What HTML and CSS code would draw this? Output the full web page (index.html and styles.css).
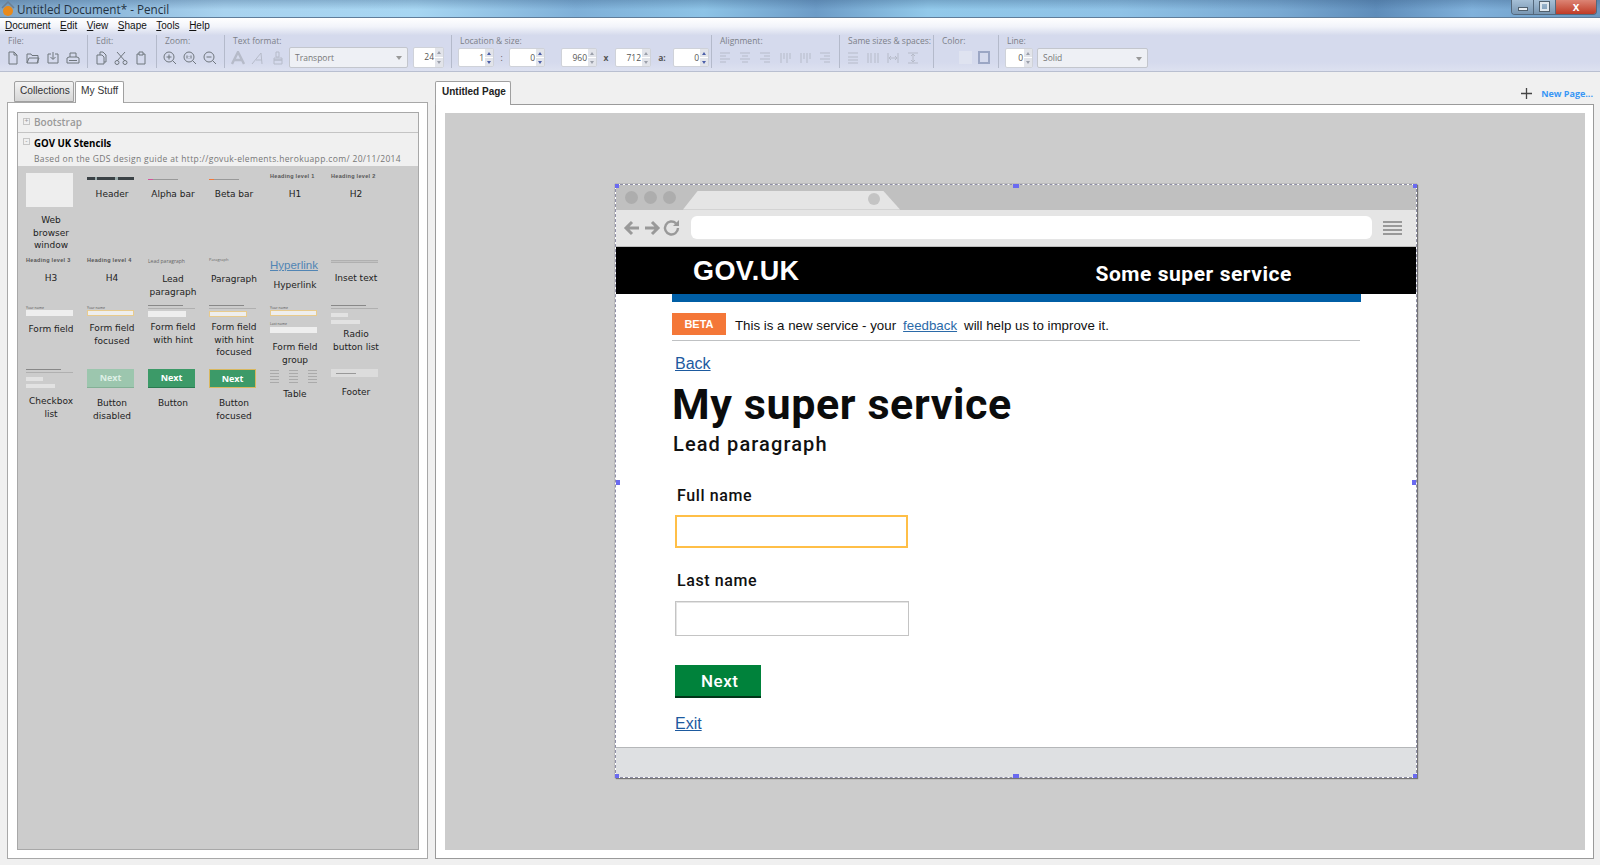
FILE: index.html

```html
<!DOCTYPE html>
<html lang="en">
<head>
  <meta charset="UTF-8">
  <meta name="viewport" content="width=device-width, initial-scale=1.0">
  <title>Untitled Document* - Pencil</title>
  <link rel="stylesheet" href="styles.css">
</head>
<body>
  <svg class="defs" width="0" height="0">
    <symbol id="i-new" viewBox="0 0 14 14"><path d="M3 1h5l3 3v9H3z M8 1v3h3"/></symbol>
    <symbol id="i-open" viewBox="0 0 14 14"><path d="M1 12V3h4l1 1.500h6V12z M1 12l2-5h10l-2 5"/></symbol>
    <symbol id="i-save" viewBox="0 0 14 14"><path d="M2 3h3 M9 3h3v9H2V3 M7 1v7 M4.500 6L7 8.500 9.500 6"/></symbol>
    <symbol id="i-print" viewBox="0 0 14 14"><path d="M4 6V2h6v4 M1 12V7l2-1h8l2 1v5z M3 9.500h8"/></symbol>
    <symbol id="i-copy" viewBox="0 0 14 14"><path d="M3 4h5l2 2v7H3z M6 4V1h3l3 3v7h-2"/></symbol>
    <symbol id="i-cut" viewBox="0 0 14 14"><path d="M3 1l8 9 M11 1L3 10"/><circle cx="3" cy="11.500" r="2"/><circle cx="11" cy="11.500" r="2"/></symbol>
    <symbol id="i-paste" viewBox="0 0 14 14"><path d="M3 3h2 M9 3h2v10H3V3 M5 4V1h4v3z"/></symbol>
    <symbol id="i-zin" viewBox="0 0 14 14"><circle cx="6" cy="6" r="5"/><path d="M9.500 9.500L13 13 M3.500 6h5 M6 3.500v5"/></symbol>
    <symbol id="i-z11" viewBox="0 0 14 14"><circle cx="6" cy="6" r="5"/><path d="M9.500 9.500L13 13 M4 4.500v3 M8 4.500v3 M6 5v.500 M6 7v.500"/></symbol>
    <symbol id="i-zout" viewBox="0 0 14 14"><circle cx="6" cy="6" r="5"/><path d="M9.500 9.500L13 13 M3.500 6h5"/></symbol>
    <symbol id="i-bold" viewBox="0 0 14 14"><path d="M1 13L7 1l6 12 M3.500 9h7" stroke-width="2.400"/></symbol>
    <symbol id="i-ital" viewBox="0 0 14 14"><path d="M1 13L10 2l1 11 M5 9h6"/></symbol>
    <symbol id="i-brush" viewBox="0 0 14 14"><path d="M5 1h3v5H5z M3 7h8v2H3z M3 9h8v4H3z"/></symbol>
    <symbol id="i-al" viewBox="0 0 14 14"><path d="M2 2h10 M2 5h6 M2 8h10 M2 11h6"/></symbol>
    <symbol id="i-ac" viewBox="0 0 14 14"><path d="M2 2h10 M4 5h6 M2 8h10 M4 11h6"/></symbol>
    <symbol id="i-ar" viewBox="0 0 14 14"><path d="M2 2h10 M6 5h6 M2 8h10 M6 11h6"/></symbol>
    <symbol id="i-av" viewBox="0 0 14 14"><path d="M3 2v10 M6 2v6 M9 2v10 M12 2v6"/></symbol>
    <symbol id="i-sh" viewBox="0 0 14 14"><path d="M2 2h10 M2 6h10 M2 9h10 M2 12h10"/></symbol>
    <symbol id="i-sv" viewBox="0 0 14 14"><path d="M2 2v10 M5 2v10 M9 2v10 M12 2v10"/></symbol>
    <symbol id="i-gh" viewBox="0 0 14 14"><path d="M2 2v10 M12 2v10 M3 7h8 M3 7l2-2 M3 7l2 2 M11 7L9 5 M11 7L9 9"/></symbol>
    <symbol id="i-gv" viewBox="0 0 14 14"><path d="M2 2h10 M2 12h10 M7 3v8 M7 3L5 5 M7 3l2 2 M7 11L5 9 M7 11l2-2"/></symbol>
  </svg>

  <div class="app">
    <div class="titlebar">
      <svg class="app-logo" width="14" height="16" viewBox="0 0 14 16"><path d="M1 7l6-6 6 6" fill="none" stroke="#6b7f93" stroke-width="1.500"/><circle cx="7" cy="10" r="5" fill="#e88a1c"/></svg>
      <span class="title-text">Untitled Document* - Pencil</span>
      <div class="win-btns">
        <span class="win-btn"><i class="win-min"></i></span>
        <span class="win-btn"><i class="win-max"></i></span>
        <span class="win-btn win-close">x</span>
      </div>
    </div>

    <div class="menubar">
      <span><u>D</u>ocument</span>
      <span><u>E</u>dit</span>
      <span><u>V</u>iew</span>
      <span><u>S</u>hape</span>
      <span><u>T</u>ools</span>
      <span><u>H</u>elp</span>
    </div>

    <div class="toolbar">
      <div class="tgroup g-file">
        <div class="tlabel">File:</div>
        <div class="tools">
          <svg class="ico"><use href="#i-new"/></svg>
          <svg class="ico"><use href="#i-open"/></svg>
          <svg class="ico"><use href="#i-save"/></svg>
          <svg class="ico"><use href="#i-print"/></svg>
        </div>
      </div>
      <div class="tgroup g-edit">
        <div class="tlabel">Edit:</div>
        <div class="tools">
          <svg class="ico"><use href="#i-copy"/></svg>
          <svg class="ico"><use href="#i-cut"/></svg>
          <svg class="ico"><use href="#i-paste"/></svg>
        </div>
      </div>
      <div class="tgroup g-zoom">
        <div class="tlabel">Zoom:</div>
        <div class="tools">
          <svg class="ico"><use href="#i-zin"/></svg>
          <svg class="ico"><use href="#i-z11"/></svg>
          <svg class="ico"><use href="#i-zout"/></svg>
        </div>
      </div>
      <div class="tgroup g-text">
        <div class="tlabel">Text format:</div>
        <div class="tools">
          <svg class="ico off"><use href="#i-bold"/></svg>
          <svg class="ico off"><use href="#i-ital"/></svg>
          <svg class="ico off"><use href="#i-brush"/></svg>
          <div class="combo combo-font">Transport<i class="caret"></i></div>
          <div class="spin spin-size">24<span class="arrows"><b></b><b></b></span></div>
        </div>
      </div>
      <div class="tgroup g-loc">
        <div class="tlabel">Location &amp; size:</div>
        <div class="tools loc-tools">
          <div class="spin active">1<span class="arrows"><b></b><b></b></span></div>
          <span class="sep-char">:</span>
          <div class="spin active">0<span class="arrows"><b></b><b></b></span></div>
          <div class="spin spin-w">960<span class="arrows"><b></b><b></b></span></div>
          <span class="sep-char">x</span>
          <div class="spin">712<span class="arrows"><b></b><b></b></span></div>
          <span class="sep-char sep-a">a:</span>
          <div class="spin active">0<span class="arrows"><b></b><b></b></span></div>
        </div>
      </div>
      <div class="tgroup g-align">
        <div class="tlabel">Alignment:</div>
        <div class="tools">
          <svg class="ico off"><use href="#i-al"/></svg>
          <svg class="ico off"><use href="#i-ac"/></svg>
          <svg class="ico off"><use href="#i-ar"/></svg>
          <svg class="ico off"><use href="#i-av"/></svg>
          <svg class="ico off"><use href="#i-av"/></svg>
          <svg class="ico off"><use href="#i-ar"/></svg>
        </div>
      </div>
      <div class="tgroup g-same">
        <div class="tlabel">Same sizes &amp; spaces:</div>
        <div class="tools">
          <svg class="ico off"><use href="#i-sh"/></svg>
          <svg class="ico off"><use href="#i-sv"/></svg>
          <svg class="ico off"><use href="#i-gh"/></svg>
          <svg class="ico off"><use href="#i-gv"/></svg>
        </div>
      </div>
      <div class="tgroup g-color">
        <div class="tlabel">Color:</div>
        <div class="tools swatches">
          <span class="swatch-fill"></span>
          <span class="swatch-line"></span>
        </div>
      </div>
      <div class="tgroup g-line">
        <div class="tlabel">Line:</div>
        <div class="tools">
          <div class="spin spin-line">0<span class="arrows"><b></b><b></b></span></div>
          <div class="combo combo-line">Solid<i class="caret"></i></div>
        </div>
      </div>
    </div>

    <div class="workspace">
      <!-- left side, stencil collections -->
      <div class="sidebar">
        <div class="tabs">
          <span class="tab tab-off">Collections</span>
          <span class="tab tab-on">My Stuff</span>
        </div>
        <div class="side-panel">
          <div class="stencil-list">
            <div class="coll-head">
              <span class="tree-box">+</span>
              <span class="coll-off">Bootstrap</span>
            </div>
            <div class="coll-open">
              <div class="coll-title"><span class="tree-box">-</span><b>GOV UK Stencils</b></div>
              <div class="coll-desc">Based on the GDS design guide at http://govuk-elements.herokuapp.com/ 20/11/2014</div>
            </div>
            <div class="stencils">
              <div class="st"><div class="pv h34"><div class="th-window"></div></div><div class="st-name">Web browser window</div></div>
              <div class="st"><div class="pv h14"><div class="th-header"></div></div><div class="st-name">Header</div></div>
              <div class="st"><div class="pv h14"><div class="th-bar pink"></div></div><div class="st-name">Alpha bar</div></div>
              <div class="st"><div class="pv h14"><div class="th-bar orange"></div></div><div class="st-name">Beta bar</div></div>
              <div class="st"><div class="pv h14"><div class="th-head">Heading level 1</div></div><div class="st-name">H1</div></div>
              <div class="st"><div class="pv h14"><div class="th-head">Heading level 2</div></div><div class="st-name">H2</div></div>

              <div class="st"><div class="pv h14"><div class="th-head">Heading level 3</div></div><div class="st-name">H3</div></div>
              <div class="st"><div class="pv h14"><div class="th-head">Heading level 4</div></div><div class="st-name">H4</div></div>
              <div class="st"><div class="pv h15"><div class="th-lead">Lead paragraph</div></div><div class="st-name">Lead paragraph</div></div>
              <div class="st"><div class="pv h15"><div class="th-para">Paragraph</div></div><div class="st-name">Paragraph</div></div>
              <div class="st"><div class="pv h21"><div class="th-link">Hyperlink</div></div><div class="st-name">Hyperlink</div></div>
              <div class="st"><div class="pv h14"><div class="th-inset"></div></div><div class="st-name">Inset text</div></div>

              <div class="st"><div class="pv h17"><div class="th-tiny">Your name</div><div class="th-input"></div></div><div class="st-name">Form field</div></div>
              <div class="st"><div class="pv h16"><div class="th-tiny">Your name</div><div class="th-input focus"></div></div><div class="st-name">Form field focused</div></div>
              <div class="st"><div class="pv h15"><div class="th-hint"></div><div class="th-input short"></div></div><div class="st-name">Form field with hint</div></div>
              <div class="st"><div class="pv h15"><div class="th-hint"></div><div class="th-input short focus"></div></div><div class="st-name">Form field with hint focused</div></div>
              <div class="st"><div class="pv h35"><div class="th-tiny">Your name</div><div class="th-input focus"></div><div class="th-tiny gap">Last name</div><div class="th-input"></div></div><div class="st-name">Form field group</div></div>
              <div class="st"><div class="pv h22"><div class="th-hint"></div><div class="th-radio"></div><div class="th-radio wide"></div></div><div class="st-name">Radio button list</div></div>

              <div class="st"><div class="pv h25"><div class="th-hint"></div><div class="th-radio"></div><div class="th-radio wide"></div></div><div class="st-name">Checkbox list</div></div>
              <div class="st"><div class="pv h27"><div class="th-btn disabled">Next</div></div><div class="st-name">Button disabled</div></div>
              <div class="st"><div class="pv h27"><div class="th-btn">Next</div></div><div class="st-name">Button</div></div>
              <div class="st"><div class="pv h27"><div class="th-btn outlined">Next</div></div><div class="st-name">Button focused</div></div>
              <div class="st"><div class="pv h18"><div class="th-table"><i></i><i></i><i></i></div></div><div class="st-name">Table</div></div>
              <div class="st"><div class="pv h16"><div class="th-footer"><i></i></div></div><div class="st-name">Footer</div></div>
            </div>
          </div>
        </div>
      </div>

      <!-- right side, the page canvas -->
      <div class="editor">
        <div class="page-tabs">
          <span class="tab tab-on page-tab">Untitled Page</span>
          <span class="new-page"><svg width="11" height="11" viewBox="0 0 11 11"><path d="M5.500 0v11 M0 5.500h11" stroke="#444" stroke-width="1.300"/></svg><b>New Page...</b></span>
        </div>
        <div class="page-panel">
          <div class="canvas">
            <div class="browser">
              <div class="tabstrip">
                <span class="dot"></span><span class="dot"></span><span class="dot"></span>
                <div class="chrome-tab"><span class="dot"></span></div>
              </div>
              <div class="navbar">
                <svg class="nav-ico" width="58" height="18" viewBox="0 0 58 18">
                  <path d="M16 9H3 M9 3L3 9l6 6 M22 9h13 M29 3l6 6-6 6" fill="none" stroke="#999" stroke-width="3"/>
                  <path d="M55 9a6.500 6.500 0 1 1-2-4.700" fill="none" stroke="#999" stroke-width="2.400"/>
                  <path d="M56 1v6h-6z" fill="#999"/>
                </svg>
                <div class="address"></div>
                <div class="burger"><i></i><i></i><i></i><i></i></div>
              </div>
              <div class="gov-head">
                <span class="gov-logo">GOV.UK</span>
                <span class="gov-service">Some super service</span>
              </div>
              <div class="gov-main">
                <div class="blue-bar"></div>
                <div class="phase">
                  <span class="phase-tag">BETA</span>
                  <span class="phase-text">This is a new service - your</span>
                  <a class="phase-text feedback">feedback</a>
                  <span class="phase-text">will help us to improve it.</span>
                </div>
                <a class="gov-link back">Back</a>
                <h1>My super service</h1>
                <p class="lead">Lead paragraph</p>
                <div class="f-label">Full name</div>
                <div class="f-input focused"></div>
                <div class="f-label second">Last name</div>
                <div class="f-input"></div>
                <div class="next-btn">Next</div>
                <a class="gov-link exit">Exit</a>
              </div>
              <div class="gov-foot"></div>

              <i class="handle h-tl"></i><i class="handle h-tc"></i><i class="handle h-tr"></i>
              <i class="handle h-ml"></i><i class="handle h-mr"></i>
              <i class="handle h-bl"></i><i class="handle h-bc"></i><i class="handle h-br"></i>
            </div>
          </div>
        </div>
      </div>
    </div>
  </div>
</body>
</html>
```

FILE: styles.css

```css
* {
  box-sizing: border-box;
}
body {
  margin: 0;
  background-color: #f0f0f0;
  font-family: "Open Sans", "DejaVu Sans", sans-serif;
  color: #222;
  overflow: hidden;
}
.defs {
  position: absolute;
}
.app {
  height: 865px;
  display: flex;
  flex-direction: column;
}

/* title bar */
.titlebar {
  height: 18px;
  flex: none;
  display: flex;
  align-items: center;
  padding-left: 1px;
  border-bottom: 1px solid #5f7d9a;
  background:
    linear-gradient(rgba(50, 85, 125, 0.3), rgba(50, 85, 125, 0) 55%),
    linear-gradient(90deg, #7ea4c6 0%, #8cb6d9 6%, #a9d3ef 14%, #a7d6f2 26%, #7fb0d8 36%, #8dc3e6 44%, #6d9cc7 51%, #92c9ea 58%, #8fc2e6 70%, #79a9d2 80%, #5f8dba 86%, #80b1db 92%, #6b97bf 100%);
}
.app-logo {
  margin-right: 2px;
}
.title-text {
  font-size: 11.700px;
  color: #24323f;
}
.win-btns {
  margin-left: auto;
  margin-right: 3px;
  margin-top: -3px;
  display: flex;
  height: 15px;
  border: 1px solid #54687c;
  border-top: 0;
  border-radius: 0 0 4px 4px;
  overflow: hidden;
}
.win-btn {
  width: 22px;
  display: flex;
  align-items: center;
  justify-content: center;
  border-right: 1px solid #54687c;
  background: linear-gradient(#a5bfd6, #7896b2);
}
.win-close {
  width: 40px;
  border-right: 0;
  background: linear-gradient(#dc8474, #bf3b26);
  color: #fff;
  font-family: "Liberation Sans", sans-serif;
  font-size: 12px;
  font-weight: bold;
  line-height: 12px;
}
.win-min {
  width: 10px;
  height: 4px;
  margin-top: 5px;
  background: #e8eef3;
  border: 1px solid #50606e;
}
.win-max {
  width: 9px;
  height: 9px;
  border: 2px solid #dfe7ee;
  outline: 1px solid #50606e;
}

/* menu and toolbar */
.menubar {
  height: 17px;
  flex: none;
  display: flex;
  gap: 9.500px;
  padding: 1px 0 0 5px;
  font-family: "Liberation Sans", sans-serif;
  font-size: 10px;
  line-height: 14px;
  color: #111;
  background: linear-gradient(#fff, #f2f4fa 50%, #d6dbed);
}
.toolbar {
  height: 37px;
  flex: none;
  display: flex;
  padding-bottom: 2px;
  background: linear-gradient(#d5daed 75%, #dde1f0);
  border-bottom: 1px solid #b9bfd0;
}
.tgroup {
  flex: none;
  height: 33px;
  padding-left: 8px;
  border-right: 1px solid #b4bacb;
}
.tlabel {
  font-size: 8.500px;
  line-height: 12px;
  color: #7c8088;
  white-space: nowrap;
}
.tools {
  display: flex;
  align-items: center;
  height: 21px;
  margin-left: -2px;
}
.g-file { width: 88px; }
.g-edit { width: 69px; }
.g-zoom { width: 68px; }
.g-text { width: 227px; }
.g-loc { width: 260px; }
.g-align { width: 128px; }
.g-same { width: 94px; }
.g-color { width: 65px; }
.g-line { border-right: 0; }

.ico {
  width: 14px;
  height: 14px;
  margin-right: 6px;
  fill: none;
  stroke: #6f767d;
  stroke-width: 1;
}
.ico.off {
  stroke: #b6bbc9;
}
.combo {
  position: relative;
  height: 21px;
  display: flex;
  align-items: center;
  padding-left: 5px;
  font-size: 8.500px;
  color: #777;
  background: #eef0f5;
  border: 1px solid #c3c6cd;
  border-radius: 2px;
}
.combo-font {
  width: 119px;
  margin-left: -2px;
}
.combo-line {
  width: 111px;
  height: 20px;
  margin-left: 4px;
}
.caret {
  position: absolute;
  right: 5px;
  top: 8px;
  border: 3px solid transparent;
  border-top: 4px solid #999;
  border-bottom: 0;
}
.spin {
  width: 36px;
  height: 21px;
  position: relative;
  flex: none;
  padding-right: 9px;
  background: #fff;
  border: 1px solid #cfd2d9;
  border-radius: 2px;
  text-align: right;
  font-size: 8.500px;
  line-height: 18px;
  color: #555;
}
.loc-tools .spin {
  height: 19px;
}
.spin-size {
  width: 31px;
  margin-left: 5px;
}
.spin-line {
  width: 28px;
  height: 20px;
}
.arrows {
  position: absolute;
  right: 0;
  top: 0;
  width: 8px;
  height: 100%;
  display: flex;
  flex-direction: column;
  gap: 1px;
}
.arrows b {
  flex: 1;
  background: #e2e4ea;
  position: relative;
}
.arrows b::after {
  content: "";
  position: absolute;
  left: 2px;
  top: 3px;
  border: 2px solid transparent;
  border-top: 0;
  border-bottom: 3px solid #9ba0aa;
}
.arrows b + b::after {
  transform: scaleY(-1);
}
.spin.active .arrows b::after {
  border-bottom-color: #4c5fa8;
}
.sep-char {
  width: 18px;
  text-align: center;
  font-size: 8.500px;
  font-weight: bold;
  color: #555;
}
.sep-char:nth-child(2) {
  width: 15px;
  font-weight: normal;
}
.sep-a {
  width: 22px;
}
.spin-w {
  margin-left: 16px;
}
.swatches {
  padding-left: 19px;
  gap: 6px;
}
.swatch-fill {
  width: 13px;
  height: 13px;
  background: #dfe3f0;
}
.swatch-line {
  width: 12px;
  height: 13px;
  border: 2px solid #9ba6c4;
}

/* workspace */
.workspace {
  flex: 1;
  display: flex;
  min-height: 0;
  padding: 9px 6px 6px 7px;
}
.sidebar {
  width: 421px;
  display: flex;
  flex-direction: column;
  flex: none;
}
.tabs {
  height: 22px;
  display: flex;
  gap: 1px;
  padding-left: 7px;
  margin-bottom: -1px;
  position: relative;
}
.tab {
  height: 22px;
  padding: 0 5px;
  font-family: "Liberation Sans", sans-serif;
  font-size: 10.200px;
  line-height: 17px;
  border: 1px solid #a0a0a0;
  border-bottom: 0;
  border-radius: 2px 2px 0 0;
  white-space: nowrap;
}
.tab-off {
  height: 21px;
  width: 60px;
  background: linear-gradient(#f3f3f3, #d6d6d6);
  border-bottom: 1px solid #a0a0a0;
  color: #333;
}
.tab-on {
  background: #fff;
  color: #333;
}
.side-panel {
  flex: 1;
  padding: 9px 8px 8px 9px;
  background: #fff;
  border: 1px solid #a8a8a8;
}
.stencil-list {
  height: 100%;
  display: flex;
  flex-direction: column;
  border: 1px solid #a8a8a8;
  background: #ccc;
}
.coll-head {
  height: 20px;
  display: flex;
  align-items: center;
  padding: 0 0 2px 5px;
  background: #f0f0f0;
  border-bottom: 1px solid #c4c4c4;
}
.tree-box {
  width: 7px;
  height: 7px;
  margin-right: 4px;
  border: 1px solid #c6c6c6;
  font-size: 7px;
  line-height: 4px;
  text-align: center;
  color: #999;
}
.coll-off {
  font-size: 10px;
  font-weight: 600;
  color: #999;
}
.coll-open {
  height: 33px;
  padding: 3px 0 0 5px;
  background: #f0f0f0;
}
.coll-title {
  display: flex;
  align-items: center;
  height: 15px;
  font-size: 9.700px;
  color: #000;
}
.coll-title .tree-box {
  margin-top: -5px;
}
.coll-desc {
  padding-left: 11px;
  font-size: 8.500px;
  line-height: 15px;
  letter-spacing: 0.350px;
  white-space: nowrap;
  color: #777;
}

/* stencil grid */
.stencils {
  display: grid;
  grid-template-columns: repeat(6, 61px);
  grid-template-rows: 84px 48px 64px auto;
  padding: 3px 0 0 1px;
}
.st {
  padding-top: 4px;
  display: flex;
  flex-direction: column;
  align-items: center;
}
.st-name {
  width: 52px;
  margin: 1px 0 0 3px;
  text-align: center;
  font-family: "DejaVu Sans", sans-serif;
  font-size: 9px;
  line-height: 12.500px;
  color: #222;
}
.pv {
  width: 47px;
  flex: none;
}
.h14 { height: 14px; }
.h15 { height: 15px; }
.h16 { height: 16px; }
.h17 { height: 17px; }
.h18 { height: 18px; }
.h21 { height: 21px; }
.h22 { height: 22px; }
.h25 { height: 25px; }
.h27 { height: 27px; }
.h34 { height: 40px; }
.h35 { height: 35px; }

.th-window {
  height: 34px;
  background: #eee;
}
.th-header {
  height: 3px;
  margin-top: 4px;
  background: linear-gradient(90deg, #3b4246 0 8px, #9aa 8px 10px, #3b4246 10px 28px, #9aa 28px 31px, #3b4246 31px);
}
.th-bar {
  height: 1px;
  margin-top: 6px;
  width: 30px;
}
.th-bar.pink {
  background: linear-gradient(90deg, #d5539b 0 5px, #999 5px);
}
.th-bar.orange {
  background: linear-gradient(90deg, #f47738 0 5px, #999 5px);
}
.th-head {
  font-family: "Liberation Sans", sans-serif;
  font-size: 5.500px;
  font-weight: bold;
  line-height: 7px;
  letter-spacing: 0.300px;
  white-space: nowrap;
  color: #555;
}
.th-lead {
  margin-top: 1px;
  font-size: 5px;
  line-height: 7px;
  white-space: nowrap;
  color: #666;
}
.th-para {
  font-size: 4px;
  line-height: 6px;
  color: #666;
}
.th-link {
  margin-top: 1px;
  font-family: "Liberation Sans", sans-serif;
  font-size: 11.500px;
  line-height: 14px;
  color: #5185b4;
  text-decoration: underline;
}
.th-inset {
  height: 3px;
  margin-top: 3px;
  background: repeating-linear-gradient(#b0b0b0 0 1px, #c2c2c2 1px 2px);
}
.th-tiny {
  font-size: 3.500px;
  line-height: 5px;
  color: #555;
}
.th-tiny.gap {
  margin-top: 5px;
  margin-bottom: 1px;
}
.th-input {
  height: 6px;
  background: #eee;
}
.th-input.focus {
  border: 1px solid #e8cb8e;
}
.th-input.short {
  width: 38px;
  margin-top: 1px;
}
.th-hint {
  height: 5px;
  margin-bottom: 1px;
  background:
    linear-gradient(#888, #888) 0 0 / 35px 1px no-repeat,
    linear-gradient(#b0b0b0, #b0b0b0) 0 3px / 47px 1px no-repeat;
}
.th-radio {
  width: 17px;
  height: 4px;
  margin-top: 3px;
  background: #e2e2e2;
}
.th-radio.wide {
  width: 29px;
}
.th-btn {
  width: 47px;
  height: 19px;
  text-align: center;
  font-family: "Open Sans", sans-serif;
  font-size: 9px;
  font-weight: bold;
  line-height: 17px;
  color: #fff;
  background: #3c9a68;
  border-bottom: 1px solid #2a7a50;
}
.th-btn.disabled {
  background: #9cc6ae;
  border-bottom-color: #84b096;
  color: #ddefe5;
}
.th-btn.outlined {
  border: 1px solid #d8b75e;
}
.th-table {
  height: 13px;
  margin-top: 1px;
  display: flex;
  justify-content: space-between;
}
.th-table i {
  width: 9px;
  background: repeating-linear-gradient(#aaa 0 1px, #ccc 1px 3px);
}
.th-footer {
  height: 8px;
  padding: 4px 0 0 5px;
  background: #dcdcdc;
}
.th-footer i {
  display: block;
  width: 20px;
  height: 1px;
  background: #999;
}

/* editor side */
.editor {
  flex: 1;
  display: flex;
  flex-direction: column;
  margin-left: 7px;
}
.page-tabs {
  height: 24px;
  flex: none;
  display: flex;
  align-items: center;
  justify-content: space-between;
  margin-bottom: -1px;
  position: relative;
}
.page-tab {
  width: 76px;
  height: 24px;
  padding: 1px 0 0 6px;
  font-size: 10px;
  font-weight: bold;
  color: #222;
}
.new-page {
  display: flex;
  align-items: center;
  gap: 9px;
  margin-right: 1px;
  font-size: 9px;
  color: #3a97f5;
}
.page-panel {
  flex: 1;
  padding: 8px 8px 8px 9px;
  background: #fff;
  border: 1px solid #9a9a9a;
}
.canvas {
  height: 100%;
  display: flex;
  align-items: center;
  justify-content: center;
  padding: 0 0 2px 2px;
  background: #ccc;
}

/* the browser frame drawn on the canvas */
.browser {
  position: relative;
  width: 802px;
  height: 594px;
  display: flex;
  flex-direction: column;
  background: #fff;
  border: 1px dashed #8f8fa6;
  box-shadow: 0 0 1px #666, 1px 1px 1px #777;
  font-family: "Liberation Sans", sans-serif;
}
.tabstrip {
  height: 25px;
  flex: none;
  display: flex;
  align-items: center;
  gap: 6px;
  padding-left: 9px;
  background: #c0c0c0;
  position: relative;
}
.dot {
  width: 13px;
  height: 13px;
  border-radius: 50%;
  background: #adadad;
}
.chrome-tab {
  position: absolute;
  left: 67px;
  top: 6px;
  width: 217px;
  height: 19px;
  padding: 2px 0 0 189px;
  background: #e5e5e5;
  clip-path: polygon(0 100%, 15px 0, 200px 0, 100% 100%);
}
.chrome-tab .dot {
  display: block;
  width: 12px;
  height: 12px;
  margin-left: -4px;
  background: #c4c4c4;
}
.navbar {
  height: 37px;
  flex: none;
  display: flex;
  align-items: center;
  padding: 0 0 0 7px;
  background: #e5e5e5;
  border-bottom: 1px solid #bbb;
}
.nav-ico {
  flex: none;
}
.address {
  width: 681px;
  height: 23px;
  margin-left: 10px;
  background: #fff;
  border-radius: 6px;
}
.burger {
  width: 19px;
  margin-left: 11px;
  display: flex;
  flex-direction: column;
  gap: 2px;
}
.burger i {
  height: 2px;
  background: #999;
}
.gov-head {
  height: 47px;
  flex: none;
  display: flex;
  align-items: center;
  padding-left: 77px;
  background: #000;
  color: #fff;
}
.gov-logo {
  font-size: 27px;
  font-weight: bold;
  letter-spacing: 0.400px;
  margin-top: 2px;
}
.gov-service {
  margin-left: 296px;
  font-family: Roboto, sans-serif;
  font-size: 21px;
  font-weight: bold;
  letter-spacing: 0.550px;
  margin-top: 7px;
}
.gov-main {
  flex: 1;
  padding: 0 0 0 56px;
  display: flex;
  flex-direction: column;
  align-items: flex-start;
}
.blue-bar {
  width: 689px;
  height: 8px;
  background: #005ea5;
}
.phase {
  width: 688px;
  height: 39px;
  display: flex;
  align-items: center;
  padding-top: 9px;
  padding-bottom: 3px;
  font-size: 13.300px;
  color: #111;
  border-bottom: 1px solid #bfc1c3;
}
.phase-text {
  margin-top: 4px;
}
.phase-tag {
  width: 54px;
  height: 22px;
  margin-right: 9px;
  text-align: center;
  font-size: 11px;
  font-weight: bold;
  line-height: 22px;
  color: #fff;
  background: #f47738;
}
.feedback {
  margin-left: 7px;
  margin-right: 7px;
  color: #2b6aa8;
  text-decoration: underline;
}
.gov-link {
  font-size: 16px;
  line-height: 20px;
  color: #1d5a9f;
  text-decoration: underline;
}
.back {
  margin: 13px 0 0 3px;
}
h1 {
  margin: 5px 0 0;
  font-family: Roboto, sans-serif;
  font-size: 43px;
  font-weight: bold;
  line-height: 50px;
  letter-spacing: 0.600px;
  color: #0b0c0c;
}
.lead {
  margin: 2px 0 0 1px;
  font-family: Roboto, sans-serif;
  font-size: 20px;
  font-weight: 500;
  line-height: 26px;
  letter-spacing: 1.100px;
  color: #111;
}
.f-label {
  margin: 28px 0 0 5px;
  font-family: Roboto, sans-serif;
  font-size: 16px;
  font-weight: 500;
  line-height: 22px;
  letter-spacing: 0.600px;
  color: #111;
}
.f-label.second {
  margin-top: 22px;
}
.f-input {
  width: 234px;
  height: 35px;
  margin: 9px 0 0 3px;
  border: 1px solid #c4c4c4;
  box-shadow: inset 1px 1px 0 #e4e4e4;
}
.f-input.focused {
  width: 233px;
  height: 33px;
  margin-top: 8px;
  border: 2px solid #ffbf47;
  box-shadow: none;
}
.next-btn {
  width: 86px;
  height: 33px;
  margin: 29px 0 0 3px;
  padding-left: 26px;
  font-family: Roboto, sans-serif;
  font-size: 17px;
  font-weight: 500;
  line-height: 33px;
  letter-spacing: 0.500px;
  color: #fff;
  background: #00823b;
  border-bottom: 2px solid #003518;
}
.exit {
  margin: 16px 0 0 3px;
}
.gov-foot {
  height: 30px;
  flex: none;
  background: #dee0e2;
  border-top: 1px solid #b5b7b9;
}
.handle {
  position: absolute;
  width: 4px;
  height: 4px;
  background: #6a6af0;
}
.h-tl { left: -1px; top: -1px; }
.h-tc { left: 397px; top: -1px; width: 6px; }
.h-tr { right: -1px; top: -1px; }
.h-ml { left: 0; top: 295px; height: 5px; }
.h-mr { right: 0; top: 295px; height: 5px; }
.h-bl { left: -1px; bottom: -1px; }
.h-bc { left: 397px; bottom: -1px; width: 6px; }
.h-br { right: -1px; bottom: -1px; }
```
